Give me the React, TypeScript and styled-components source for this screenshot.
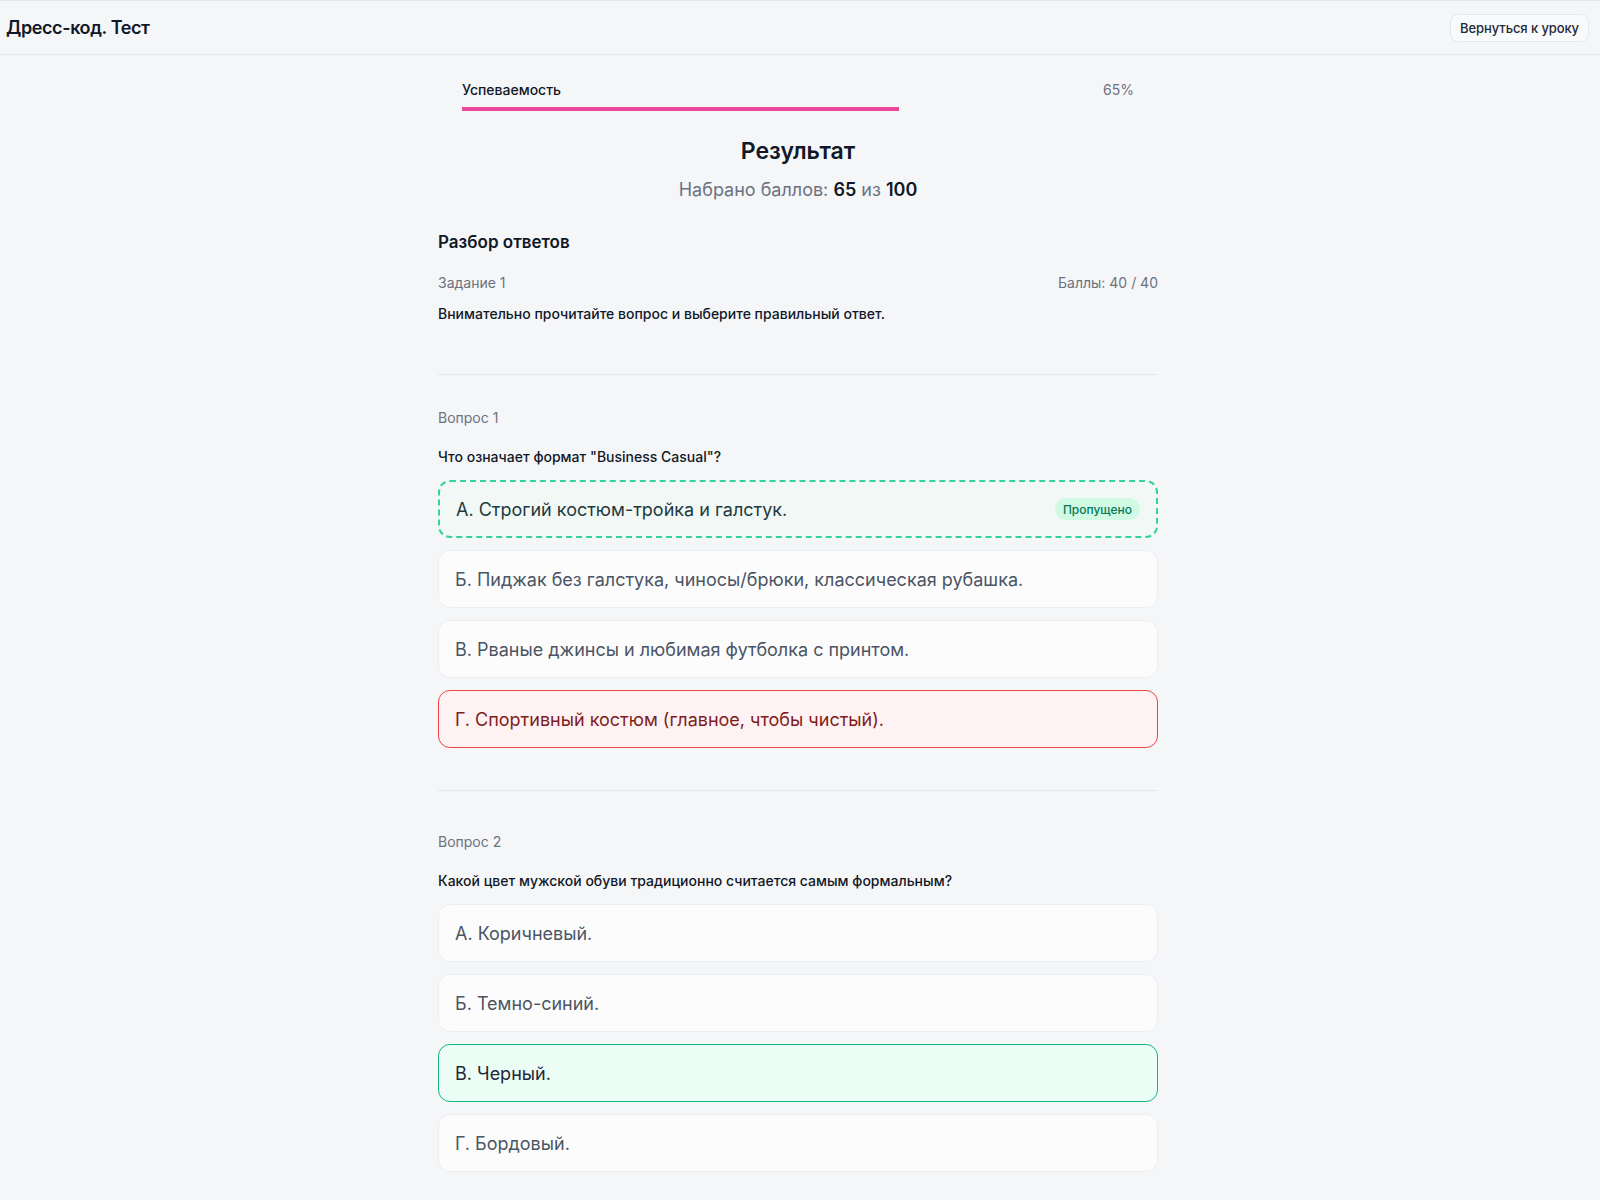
import React from "react";
import styled, { createGlobalStyle, css } from "styled-components";

type OptionState = "idle" | "correct" | "wrong" | "missed";

interface Option {
  text: string;
  state: OptionState;
  badge?: string;
}

interface Question {
  label: string;
  text: string;
  options: Option[];
}

const questions: Question[] = [
  {
    label: "Вопрос 1",
    text: 'Что означает формат "Business Casual"?',
    options: [
      { text: "А. Строгий костюм-тройка и галстук.", state: "missed", badge: "Пропущено" },
      { text: "Б. Пиджак без галстука, чиносы/брюки, классическая рубашка.", state: "idle" },
      { text: "В. Рваные джинсы и любимая футболка с принтом.", state: "idle" },
      { text: "Г. Спортивный костюм (главное, чтобы чистый).", state: "wrong" },
    ],
  },
  {
    label: "Вопрос 2",
    text: "Какой цвет мужской обуви традиционно считается самым формальным?",
    options: [
      { text: "А. Коричневый.", state: "idle" },
      { text: "Б. Темно-синий.", state: "idle" },
      { text: "В. Черный.", state: "correct" },
      { text: "Г. Бордовый.", state: "idle" },
    ],
  },
];

const GlobalStyle = createGlobalStyle`
  * { box-sizing: border-box; }
  body {
    margin: 0;
    background: #f5f6f8;
    font-family: Inter, "Noto Sans", "Liberation Sans", sans-serif;
    color: #111827;
  }
`;

const Header = styled.header`
  height: 55px;
  display: flex;
  align-items: center;
  justify-content: space-between;
  padding: 0 11px 0 6px;
  border-top: 1px solid #e5e7eb;
  border-bottom: 1px solid #e5e7eb;
`;

const HeaderTitle = styled.h1`
  margin: 0;
  font-size: 18px;
  font-weight: 600;
  letter-spacing: -0.4px;
  color: #111827;
`;

const BackButton = styled.button`
  height: 28px;
  padding: 0 9px;
  border: 1px solid #e5e7eb;
  border-radius: 8px;
  background: #f9fafb;
  font-family: inherit;
  font-size: 13px;
  font-weight: 500;
  letter-spacing: -0.1px;
  color: #1f2937;
  cursor: pointer;
`;

const Main = styled.main`
  width: 720px;
  margin: 0 0 0 calc(50% - 362px);
  padding-bottom: 40px;
`;

const Progress = styled.section`
  padding: 24px 24px 0;
`;

const ProgressRow = styled.div`
  display: flex;
  justify-content: space-between;
  align-items: center;
  height: 20px;
  font-size: 14px;
`;

const ProgressLabel = styled.span`
  font-weight: 500;
  color: #111827;
`;

const ProgressValue = styled.span`
  color: #6b7280;
`;

const Track = styled.div`
  margin-top: 8px;
  height: 4px;
`;

const Fill = styled.div`
  height: 100%;
  background: #ec4899;
`;

const ResultTitle = styled.h2`
  margin: 25px 0 0;
  text-align: center;
  font-size: 23px;
  line-height: 30px;
  font-weight: 600;
  color: #111827;
`;

const Score = styled.p`
  margin: 12px 0 0;
  text-align: center;
  font-size: 18px;
  line-height: 24px;
  color: #6b7280;

  b {
    font-weight: 600;
    color: #111827;
  }
`;

const SectionTitle = styled.h3`
  margin: 28px 0 0;
  font-size: 17px;
  line-height: 24px;
  font-weight: 600;
  color: #111827;
`;

const Block = styled.div<{ $bottom: number; $top: number; $last?: boolean }>`
  padding-top: ${(p) => p.$top}px;
  padding-bottom: ${(p) => p.$bottom}px;
  border-bottom: ${(p) => (p.$last ? "none" : "1px solid #e5e7eb")};
`;

const MetaRow = styled.div`
  display: flex;
  justify-content: space-between;
  font-size: 14px;
  line-height: 20px;
  color: #6b7280;
`;

const BodyText = styled.p<{ $gap: number }>`
  margin: ${(p) => p.$gap}px 0 0;
  font-size: 14px;
  line-height: 20px;
  font-weight: 500;
  color: #111827;
`;

const Options = styled.div`
  margin-top: 13px;
  display: flex;
  flex-direction: column;
  gap: 12px;
`;

const optionLook = {
  idle: css`
    background: #fcfcfd;
    border: 1px solid #eceef1;
    color: #4b5563;
  `,
  correct: css`
    background: #ecfdf5;
    border: 1px solid #10b981;
    color: #1f2937;
  `,
  wrong: css`
    background: #fef2f2;
    border: 1px solid #ef4444;
    color: #7f1d1d;
  `,
  missed: css`
    background: #f1f8f5;
    border: 2px dashed #34d399;
    color: #1e3a40;
  `,
};

const OptionBox = styled.div<{ $state: OptionState }>`
  height: 58px;
  display: flex;
  align-items: center;
  justify-content: space-between;
  padding: 0 16px;
  border-radius: 12px;
  font-size: 18px;
  ${(p) => optionLook[p.$state]}
`;

const Badge = styled.span`
  height: 22px;
  padding: 0 8px;
  display: inline-flex;
  align-items: center;
  border-radius: 999px;
  background: #d1fae5;
  color: #047857;
  font-size: 12px;
  font-weight: 500;
`;

const QuestionBlock = ({ q, top, bottom, last }: { q: Question; top: number; bottom: number; last?: boolean }) => (
  <Block $top={top} $bottom={bottom} $last={last}>
    <MetaRow>
      <span>{q.label}</span>
    </MetaRow>
    <BodyText $gap={19}>{q.text}</BodyText>
    <Options>
      {q.options.map((o, i) => (
        <OptionBox key={i} $state={o.state}>
          <span>{o.text}</span>
          {o.badge && <Badge>{o.badge}</Badge>}
        </OptionBox>
      ))}
    </Options>
  </Block>
);

export default function App() {
  const percent = 65;

  return (
    <>
      <GlobalStyle />
      <Header>
        <HeaderTitle>Дресс-код. Тест</HeaderTitle>
        <BackButton>Вернуться к уроку</BackButton>
      </Header>
      <Main>
        <Progress>
          <ProgressRow>
            <ProgressLabel>Успеваемость</ProgressLabel>
            <ProgressValue>{percent}%</ProgressValue>
          </ProgressRow>
          <Track>
            <Fill style={{ width: `${percent}%` }} />
          </Track>
        </Progress>

        <ResultTitle>Результат</ResultTitle>
        <Score>
          Набрано баллов: <b>65</b> из <b>100</b>
        </Score>

        <SectionTitle>Разбор ответов</SectionTitle>

        <Block $top={19} $bottom={50}>
          <MetaRow>
            <span>Задание 1</span>
            <span>Баллы: 40 / 40</span>
          </MetaRow>
          <BodyText $gap={11}>Внимательно прочитайте вопрос и выберите правильный ответ.</BodyText>
        </Block>

        <QuestionBlock q={questions[0]} top={33} bottom={42} />
        <QuestionBlock q={questions[1]} top={41} bottom={40} last />
      </Main>
    </>
  );
}
